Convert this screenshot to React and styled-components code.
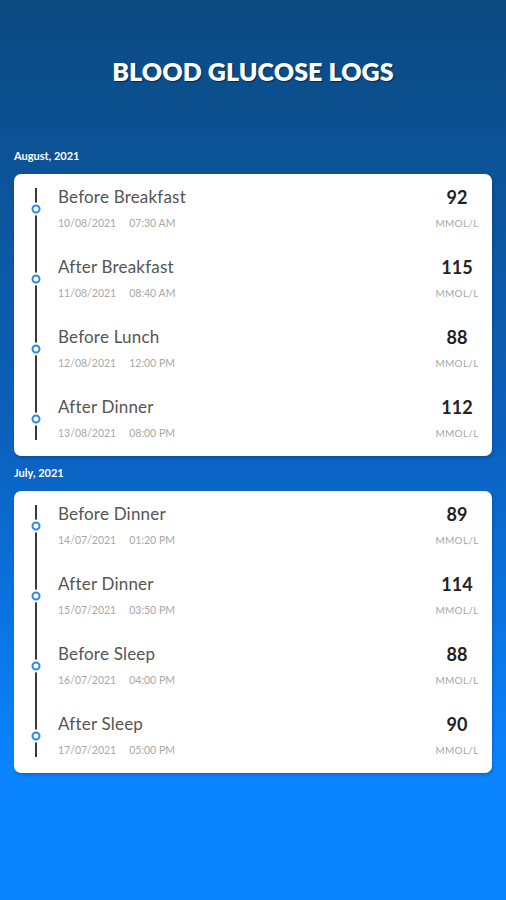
import React from 'react';
import styled, { createGlobalStyle } from 'styled-components';

const logs = [
    {
        month: 'August, 2021',
        items: [
            { label: 'Before Breakfast', date: '10/08/2021', time: '07:30 AM', value: 92 },
            { label: 'After Breakfast', date: '11/08/2021', time: '08:40 AM', value: 115 },
            { label: 'Before Lunch', date: '12/08/2021', time: '12:00 PM', value: 88 },
            { label: 'After Dinner', date: '13/08/2021', time: '08:00 PM', value: 112 },
        ],
    },
    {
        month: 'July, 2021',
        items: [
            { label: 'Before Dinner', date: '14/07/2021', time: '01:20 PM', value: 89 },
            { label: 'After Dinner', date: '15/07/2021', time: '03:50 PM', value: 114 },
            { label: 'Before Sleep', date: '16/07/2021', time: '04:00 PM', value: 88 },
            { label: 'After Sleep', date: '17/07/2021', time: '05:00 PM', value: 90 },
        ],
    },
];

const App = () => {
    return (
        <Page>
            <GlobalStyle />
            <Title>BLOOD GLUCOSE LOGS</Title>
            {logs.map((group) => (
                <Section key={group.month}>
                    <MonthLabel>{group.month}</MonthLabel>
                    <Card>
                        {group.items.map((item, i) => (
                            <Row key={item.date}>
                                <Timeline first={i === 0} last={i === group.items.length - 1}>
                                    <Dot />
                                </Timeline>
                                <Info>
                                    <Label>{item.label}</Label>
                                    <Meta>
                                        <span>{item.date}</span>
                                        <span>{item.time}</span>
                                    </Meta>
                                </Info>
                                <Reading>
                                    <Value>{item.value}</Value>
                                    <Unit>MMOL/L</Unit>
                                </Reading>
                            </Row>
                        ))}
                    </Card>
                </Section>
            ))}
        </Page>
    );
};

const GlobalStyle = createGlobalStyle`
    html, body {
        margin: 0;
        padding: 0;
    }
    body {
        font-family: Lato, "Open Sans", sans-serif;
    }
`;

const Page = styled.div`
    width: 506px;
    min-height: 900px;
    box-sizing: border-box;
    padding: 0 14px 40px;
    background: linear-gradient(180deg, #0c4a80 0%, #0b62c0 50%, #0a84ff 86%, #0a84ff 100%);
`;

const Title = styled.h1`
    margin: 0;
    padding-top: 55px;
    height: 100px;
    box-sizing: border-box;
    text-align: center;
    font-family: Lato, sans-serif;
    font-weight: 800;
    font-size: 25px;
    letter-spacing: 0.1px;
    line-height: 32px;
    color: #fff;
    text-shadow: 1px 1px 1px rgba(0, 20, 60, 0.7);
`;

const Section = styled.section`
    margin-top: 49px;

    & + & {
        margin-top: 10px;
    }
`;

const MonthLabel = styled.div`
    font-size: 11px;
    font-weight: 700;
    color: #fff;
    line-height: 14px;
    margin-bottom: 11px;
`;

const Card = styled.div`
    background: #fff;
    border-radius: 7px;
    padding: 1px 14px 1px 0;
    box-shadow: 1px 2px 3px rgba(0, 20, 60, 0.25);
`;

const Row = styled.div`
    display: flex;
    align-items: center;
    height: 70px;
`;

const Timeline = styled.div`
    position: relative;
    width: 44px;
    align-self: stretch;
    flex-shrink: 0;

    &::before {
        content: '';
        position: absolute;
        left: 21px;
        width: 1.5px;
        top: ${(p) => (p.first ? '13px' : '0')};
        bottom: ${(p) => (p.last ? '15px' : '0')};
        background: #3a3a3a;
    }
`;

const Dot = styled.span`
    position: absolute;
    left: 22px;
    top: 34px;
    width: 5px;
    height: 5px;
    transform: translate(-50%, -50%);
    border: 2px solid #2f86ee;
    border-radius: 50%;
    background: #fff;
    box-shadow: 0 0 0 2px #fff;
`;

const Info = styled.div`
    flex: 1;
    display: flex;
    flex-direction: column;
    gap: 10px;
    padding-bottom: 3px;
`;

const Label = styled.div`
    font-size: 17px;
    color: #555;
    line-height: 20px;
    letter-spacing: 0.2px;
`;

const Meta = styled.div`
    display: flex;
    gap: 13px;
    font-size: 10.5px;
    color: #a8a8a8;
    line-height: 13px;
`;

const Reading = styled.div`
    width: 42px;
    display: flex;
    flex-direction: column;
    align-items: center;
    gap: 10px;
    padding-bottom: 3px;
`;

const Value = styled.div`
    font-size: 18px;
    font-weight: 700;
    color: #222;
    line-height: 20px;
`;

const Unit = styled.div`
    font-size: 10px;
    color: #a8a8a8;
    line-height: 13px;
    letter-spacing: 0.3px;
`;

export default App;
